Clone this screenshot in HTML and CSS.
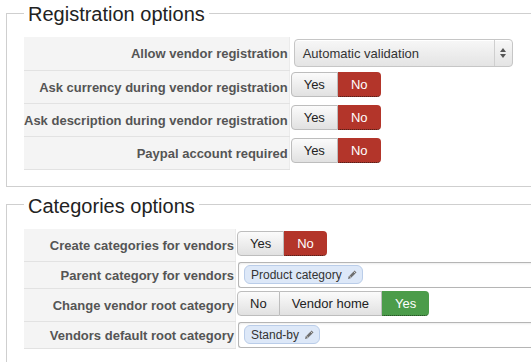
FILE: index.html
```html
<!DOCTYPE html>
<html>
<head>
    <title>Vendor options</title>
    <link rel="stylesheet" href="styles.css">
</head>
<body>
    <fieldset class="options">
        <legend>Registration options</legend>
        <table class="admintable">
            <tr>
                <td class="key">Allow vendor registration</td>
                <td class="value">
                    <div class="select">
                        <span>Automatic validation</span>
                        <span class="select-arrows">
                            <svg width="8" height="12" viewBox="0 0 8 12"><path d="M4 1 L7 5 L1 5 Z M4 11 L7 7 L1 7 Z" fill="#555"/></svg>
                        </span>
                    </div>
                </td>
            </tr>
            <tr>
                <td class="key">Ask currency during vendor registration</td>
                <td class="value"><div class="toggle"><span class="btn">Yes</span><span class="btn btn-no active">No</span></div></td>
            </tr>
            <tr>
                <td class="key">Ask description during vendor registration</td>
                <td class="value"><div class="toggle"><span class="btn">Yes</span><span class="btn btn-no active">No</span></div></td>
            </tr>
            <tr>
                <td class="key">Paypal account required</td>
                <td class="value"><div class="toggle"><span class="btn">Yes</span><span class="btn btn-no active">No</span></div></td>
            </tr>
        </table>
    </fieldset>
    <fieldset class="options second">
        <legend>Categories options</legend>
        <table class="admintable">
            <tr>
                <td class="key">Create categories for vendors</td>
                <td class="value"><div class="toggle"><span class="btn">Yes</span><span class="btn btn-no active">No</span></div></td>
            </tr>
            <tr>
                <td class="key">Parent category for vendors</td>
                <td class="value">
                    <div class="tag-input">
                        <span class="tag">Product category
                            <svg class="pencil" width="11" height="11" viewBox="0 0 11 11"><path d="M1 10 L1.7 7.4 L7.6 1.5 L9.5 3.4 L3.6 9.3 Z" fill="#6f6f6f"/><path d="M2.4 7 L4 8.6 M6.6 2.5 L8.5 4.4" stroke="#e4e4e4" stroke-width="0.9"/></svg>
                        </span>
                    </div>
                </td>
            </tr>
            <tr>
                <td class="key">Change vendor root category</td>
                <td class="value"><div class="toggle"><span class="btn">No</span><span class="btn mid">Vendor home</span><span class="btn btn-yes active">Yes</span></div></td>
            </tr>
            <tr>
                <td class="key">Vendors default root category</td>
                <td class="value">
                    <div class="tag-input">
                        <span class="tag">Stand-by
                            <svg class="pencil" width="11" height="11" viewBox="0 0 11 11"><path d="M1 10 L1.7 7.4 L7.6 1.5 L9.5 3.4 L3.6 9.3 Z" fill="#6f6f6f"/><path d="M2.4 7 L4 8.6 M6.6 2.5 L8.5 4.4" stroke="#e4e4e4" stroke-width="0.9"/></svg>
                        </span>
                    </div>
                </td>
            </tr>
        </table>
    </fieldset>
</body>
</html>
```

FILE: styles.css
```css
body {
    font-family: "Liberation Sans", Arial, sans-serif;
    font-size: 13px;
    color: #333;
    background-color: #fff;
    margin: 0;
    padding: 0;
    overflow: hidden;
}
.options {
    width: 560px;
    margin: 0 0 0 6px;
    padding: 11px 17px 16px 17px;
    border: 1px solid #cfcfcf;
    border-right: none;
}
.options.second {
    margin-top: 5px;
}
.options legend {
    font-size: 20px;
    line-height: 23px;
    color: #222;
    padding: 3px 4px 0 4px;
}
.admintable {
    border-collapse: collapse;
    border-spacing: 0;
}
.admintable td {
    padding: 0;
    vertical-align: middle;
}
.admintable td.key {
    width: 210px;
    background-color: #f4f4f4;
    border-bottom: 1px solid #e2e2e2;
    border-right: 1px solid #ebebeb;
    color: #555;
    font-weight: bold;
    text-align: right;
    white-space: nowrap;
    padding: 6px 1px 5px 0;
    line-height: 15px;
}
.admintable td.value {
    padding: 0 0 0 1px;
    vertical-align: top;
}
.select {
    display: flex;
    align-items: center;
    width: 217px;
    height: 26px;
    margin: 2px 0 3px 3px;
    border: 1px solid #c6c6c6;
    border-radius: 4px;
    background: linear-gradient(#f7f7f7, #e4e4e4);
    box-shadow: inset 0 1px 0 #fff;
    font-size: 13px;
    color: #333;
}
.select span:first-child {
    flex: 1;
    padding-left: 8px;
}
.select-arrows {
    width: 17px;
    height: 26px;
    border-left: 1px solid #cfcfcf;
    display: flex;
    align-items: center;
    justify-content: center;
}
.toggle {
    display: flex;
    margin: 2px 0 6px 0;
}
.btn {
    height: 23px;
    line-height: 23px;
    padding: 0 12px;
    border: 1px solid #bdbdbd;
    background: linear-gradient(#fbfbfb, #e1e1e1);
    color: #222;
    font-size: 13px;
}
.btn:first-child {
    border-radius: 4px 0 0 4px;
}
.btn:last-child {
    border-radius: 0 4px 4px 0;
}
.btn.mid {
    border-left: none;
}
.btn.active {
    color: #fff;
    border-color: transparent;
    border-bottom: 1px dotted #3a1a16;
}
.btn-no.active {
    background: #b3352a;
}
.btn-yes.active {
    background: #4b9c4a;
    border-bottom-color: #1d3d1c;
}
.tag-input {
    width: 300px;
    height: 24px;
    margin: 0 0 1px 1px;
    border: 1px solid #b5b5b5;
    border-right: none;
    border-radius: 3px 0 0 3px;
    box-shadow: inset 0 1px 2px rgba(0, 0, 0, 0.08);
    display: flex;
    align-items: center;
    padding-left: 5px;
}
.tag {
    display: inline-flex;
    align-items: center;
    height: 17px;
    padding: 0 4px 0 6px;
    background-color: #dde8f8;
    border: 1px solid #bacde9;
    border-radius: 6px;
    font-size: 12px;
    color: #333;
}
.pencil {
    margin-left: 5px;
}
```
